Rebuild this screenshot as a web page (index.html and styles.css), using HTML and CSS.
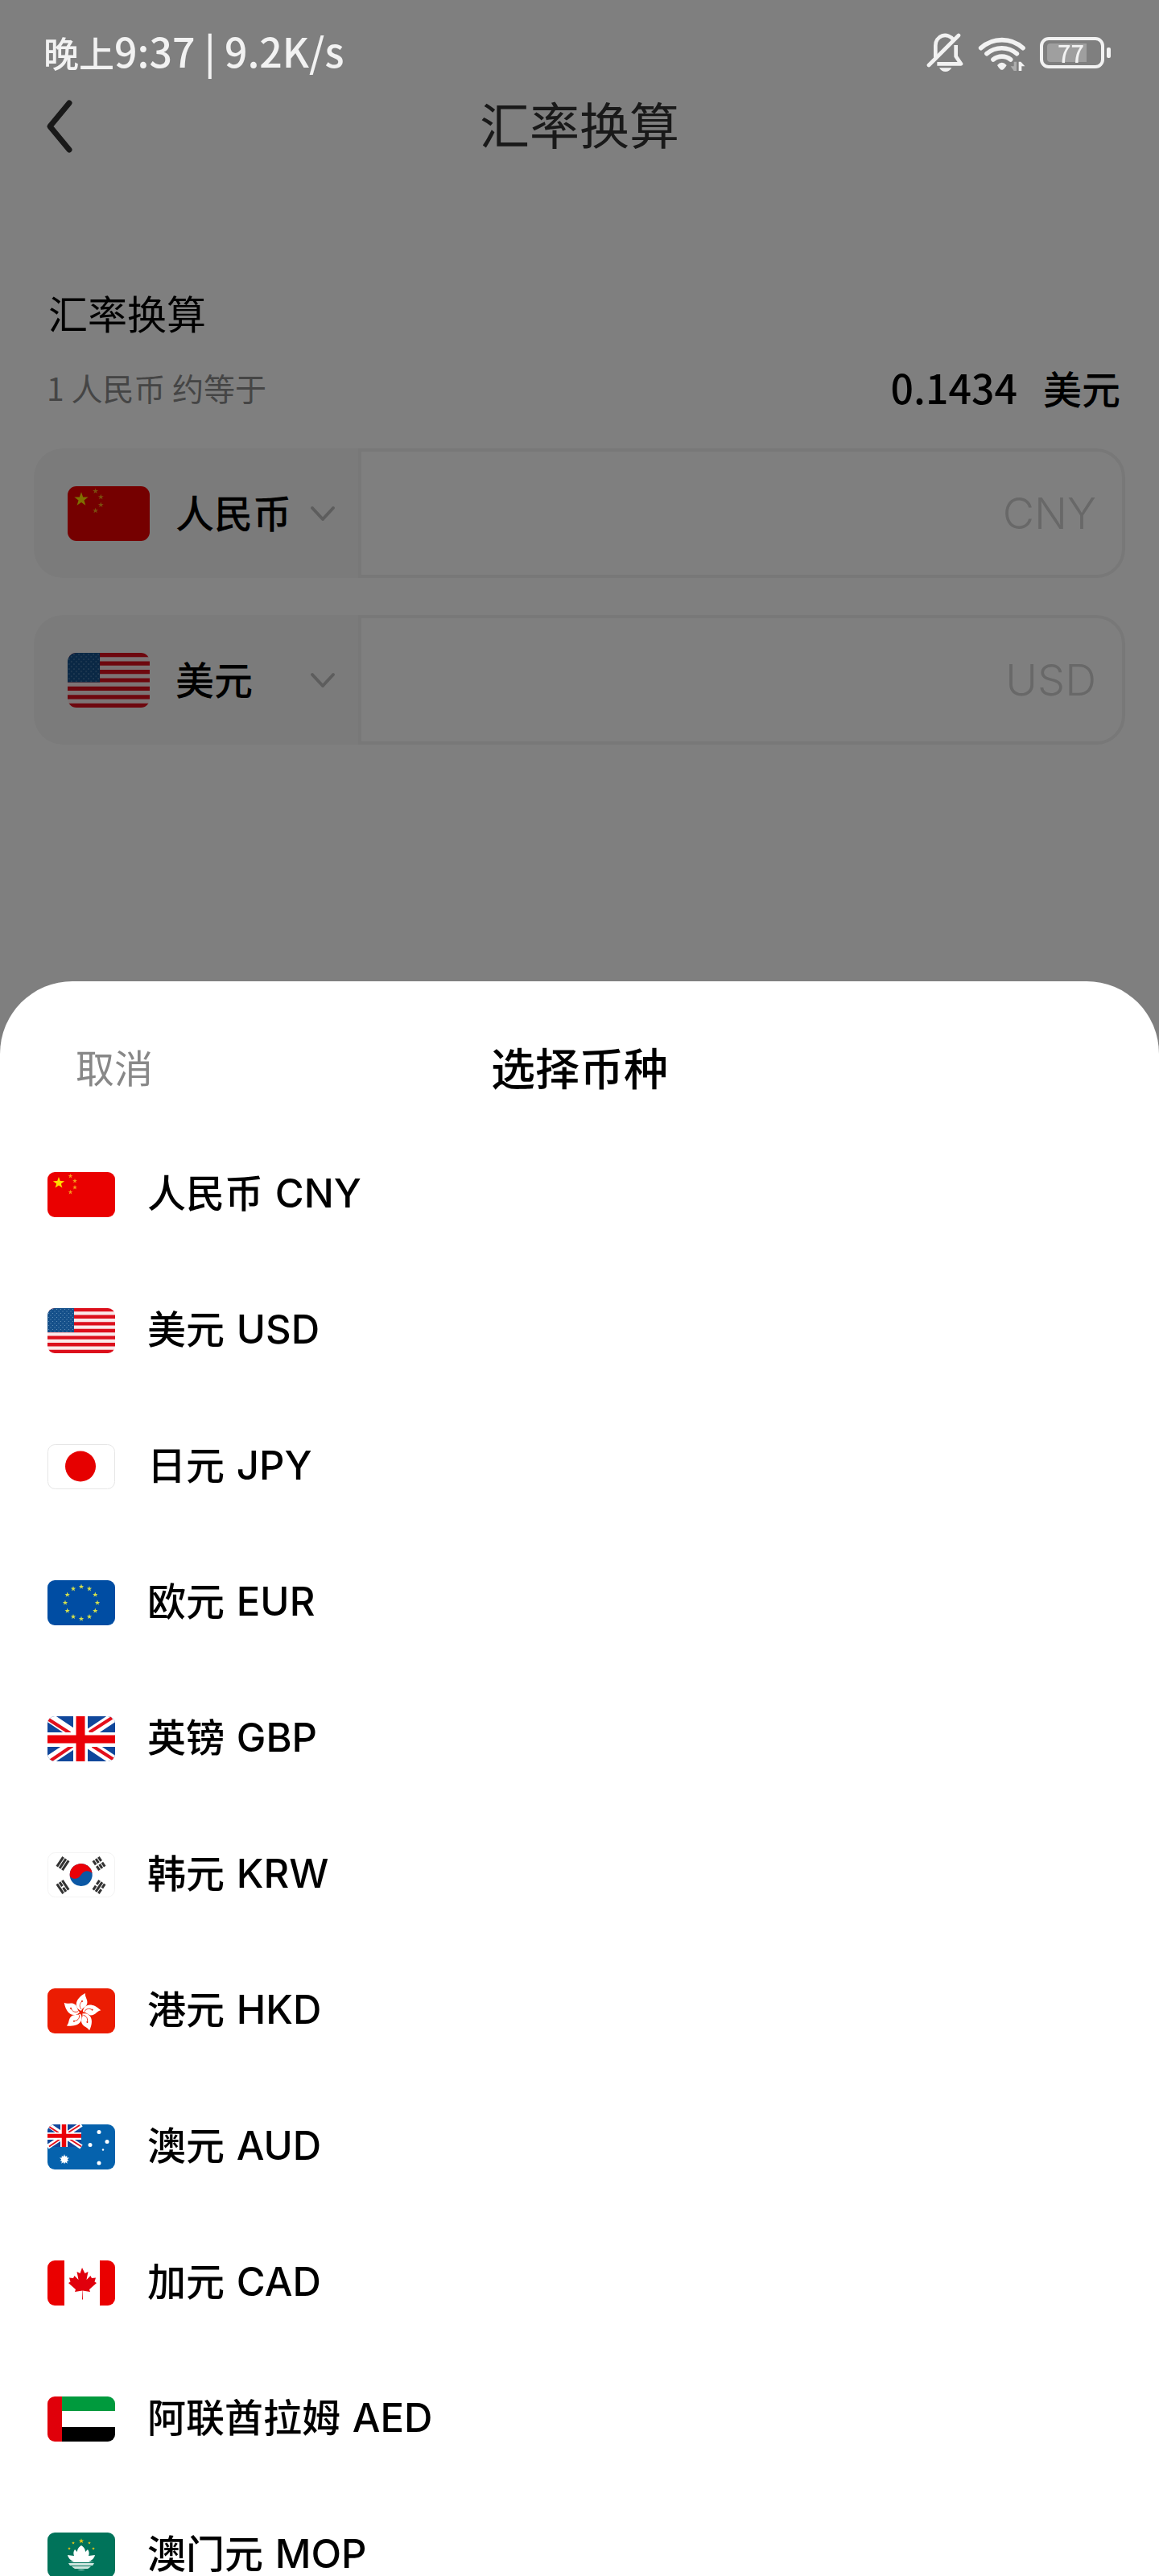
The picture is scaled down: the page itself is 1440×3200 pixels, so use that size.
FILE: index.html
```html
<!DOCTYPE html>
<html lang="zh-CN">
<head>
<meta charset="utf-8">
<meta name="viewport" content="width=device-width, initial-scale=1">
<title>汇率换算</title>
<link rel="stylesheet" href="styles.css">
</head>
<body>
<svg class="defs" aria-hidden="true">
  <defs>
    <clipPath id="round"><rect width="84" height="56" rx="9"/></clipPath>
    <path id="star" d="M0-10 2.4-3.2 9.5-3.1 3.8 1.2 5.9 8.1 0 4-5.9 8.1-3.8 1.2-9.5-3.1-2.4-3.2z"/>
    <pattern id="dots" width="5" height="5" patternUnits="userSpaceOnUse">
      <circle cx="1.5" cy="1.5" r=".6" fill="#6f9abf"/><circle cx="4" cy="4" r=".6" fill="#6f9abf"/>
    </pattern>
    <symbol id="cn" viewBox="0 0 84 56"><g clip-path="url(#round)">
      <path fill="#ea0000" d="M0 0h84v56H0z"/>
      <g fill="#ffde00"><use href="#star" transform="translate(14 13.5) scale(.75)"/></g>
      <g fill="#f59a1c"><use href="#star" transform="translate(28.500 5) scale(.3)"/><use href="#star" transform="translate(34 11) scale(.3)"/><use href="#star" transform="translate(34 19) scale(.3)"/><use href="#star" transform="translate(28.500 25) scale(.3)"/></g>
    </g></symbol>
    <symbol id="us" viewBox="0 0 84 56"><g clip-path="url(#round)">
      <path fill="#fbe9ea" d="M0 0h84v56H0z"/>
      <path stroke="#dc0f1c" stroke-width="4.300" d="M0 2.150h84M0 10.770h84M0 19.380h84M0 28h84M0 36.600h84M0 45.230h84M0 53.850h84"/>
      <path fill="#15508a" d="M0 0h33v30H0z"/><path fill="url(#dots)" d="M0 0h33v30H0z"/>
    </g></symbol>
    <symbol id="jp" viewBox="0 0 84 56">
      <rect x=".5" y=".5" width="83" height="55" rx="9" fill="#fff" stroke="#e6e6e6"/><circle cx="41" cy="27.500" r="19" fill="#e60000"/>
    </symbol>
    <symbol id="eu" viewBox="0 0 84 56"><g clip-path="url(#round)">
      <path fill="#004da3" d="M0 0h84v56H0z"/>
      <g fill="#d3e04c" transform="translate(42 28)">
        <use href="#star" transform="translate(0 -20) scale(.34)"/><use href="#star" transform="translate(10 -17.300) scale(.34)"/><use href="#star" transform="translate(17.300 -10) scale(.34)"/><use href="#star" transform="translate(20 0) scale(.34)"/><use href="#star" transform="translate(17.300 10) scale(.34)"/><use href="#star" transform="translate(10 17.300) scale(.34)"/><use href="#star" transform="translate(0 20) scale(.34)"/><use href="#star" transform="translate(-10 17.300) scale(.34)"/><use href="#star" transform="translate(-17.300 10) scale(.34)"/><use href="#star" transform="translate(-20 0) scale(.34)"/><use href="#star" transform="translate(-17.300 -10) scale(.34)"/><use href="#star" transform="translate(-10 -17.300) scale(.34)"/>
      </g>
    </g></symbol>
    <g id="union">
      <path fill="#10479b" d="M0 0h84v56H0z"/>
      <path stroke="#fff" stroke-width="12" d="M0 0 84 56M84 0 0 56"/>
      <path stroke="#e3101c" stroke-width="4" d="M0 3 28 21M52 20 80 2M4 55 32 36M56 37 84 55"/>
      <path fill="#fff" d="M32 0h18v56H32zM0 20h84v18H0z"/>
      <path fill="#ea0008" d="M35.500 0h11v56h-11zM0 23.500h84v10H0z"/>
    </g>
    <symbol id="gb" viewBox="0 0 84 56"><g clip-path="url(#round)"><use href="#union"/></g></symbol>
    <symbol id="kr" viewBox="0 0 84 56">
      <rect x=".5" y=".5" width="83" height="55" rx="9" fill="#fff" stroke="#f3f3f3"/>
      <g transform="rotate(-8 41.700 28)"><circle cx="41.700" cy="28" r="14" fill="#0b58a5"/><path fill="#ea0008" d="M27.700 28a14 14 0 0 1 28 0c-4-5-10-5-14 0s-10 5-14 0z"/></g>
      <g stroke="#333" stroke-width="3">
        <path transform="translate(19 14) rotate(-56)" d="M-7-4H7M-7 0H7M-7 4H7"/>
        <path transform="translate(64 14) rotate(56)" d="M-7-4h6M1-4h6M-7 0h6M1 0h6M-7 4h6M1 4h6"/>
        <path transform="translate(19 43) rotate(56)" d="M-7-4H7M-7 0h6M1 0h6M-7 4H7"/>
        <path transform="translate(64 43) rotate(-56)" d="M-7-4h6M1-4h6M-7 0H7M-7 4h6M1 4h6"/>
      </g>
    </symbol>
    <g id="petal"><path fill="#fff" d="M0-2C-8-5-10-16 5-24 4-19 9-16 7-10 5-6 1-6 0-2z"/><path fill="none" stroke="#eb1c02" stroke-width=".8" d="M0-4C-3-8-2-11 1-14"/><circle cx="1" cy="-14" r="1" fill="#eb1c02"/></g>
    <symbol id="hk" viewBox="0 0 84 56"><g clip-path="url(#round)">
      <path fill="#eb1c02" d="M0 0h84v56H0z"/>
      <g transform="translate(42 30)"><use href="#petal"/><use href="#petal" transform="rotate(72)"/><use href="#petal" transform="rotate(144)"/><use href="#petal" transform="rotate(216)"/><use href="#petal" transform="rotate(288)"/></g>
    </g></symbol>
    <symbol id="au" viewBox="0 0 84 56"><g clip-path="url(#round)">
      <path fill="#0562ad" d="M0 0h84v56H0z"/>
      <use href="#union" transform="scale(.5)"/>
      <g fill="#fff"><circle cx="21" cy="43.500" r="4"/><use href="#star" transform="translate(21 43.500) scale(.65)"/><use href="#star" transform="translate(21 43.500) rotate(180) scale(.6)"/><circle cx="64" cy="9.500" r="2.500"/><circle cx="74" cy="21.500" r="2.500"/><circle cx="53" cy="25.500" r="2.500"/><circle cx="69" cy="31.500" r="1.200"/><circle cx="64" cy="48" r="2.500"/></g>
    </g></symbol>
    <symbol id="ca" viewBox="0 0 84 56"><g clip-path="url(#round)">
      <path fill="#fff" d="M0 0h84v56H0z"/><path fill="#ea0000" d="M0 0h21v56H0zM65 0h19v56H65z"/>
      <path fill="#e0000c" d="M43 9l3.500 7 4-2-2 10 5-5 1.500 3 5-.5-1.500 5 2.500 1.500-9 8 1 3-9.300-1.500.3 11h-1l.3-11L34 39l1-3-9-8 2.500-1.500-1.500-5 5 .5 1.500-3 5 5-2-10 4 2z"/>
    </g></symbol>
    <symbol id="ae" viewBox="0 0 84 56"><g clip-path="url(#round)">
      <path fill="#fff" d="M0 0h84v56H0z"/><path fill="#009a3d" d="M17 0h67v18H17z"/><path d="M17 38h67v18H17z"/><path fill="#e0000a" d="M0 0h18v56H0z"/>
    </g></symbol>
    <symbol id="mo" viewBox="0 0 84 56"><g clip-path="url(#round)">
      <path fill="#00735a" d="M0 0h84v56H0z"/>
      <g fill="#e6c619"><use href="#star" transform="translate(42 10.500) scale(.33)"/><use href="#star" transform="translate(32 13) scale(.2)"/><use href="#star" transform="translate(52 13) scale(.2)"/><use href="#star" transform="translate(27 20) scale(.2)"/><use href="#star" transform="translate(57 20) scale(.2)"/></g>
      <path fill="#fff" d="M42 16c4 3 5 5 5 8l3-3c2 3 2 5 1 8l8-1c-1 4-4 7-8 8l7 1H26l7-1c-4-1-7-4-8-8l8 1c-1-3-1-5 1-8l3 3c0-3 1-5 5-8z"/>
      <path fill="#cfe6df" d="M26 38h32q-1 2-2 3H28q-1-1-2-3zM30 42h24q-2 2-4 3H34q-2-1-4-3zM37 46h10q-5 2-10 0z"/>
    </g></symbol>
    <symbol id="chevron" viewBox="0 0 32 20"><path d="M3 3l13 14L29 3" fill="none" stroke="currentColor" stroke-width="4" stroke-linecap="round" stroke-linejoin="round"/></symbol>
  </defs>
</svg>

<header class="status">
  <span class="status-text">晚上<span class="status-latin">9:37 | 9.2K/s</span></span>
  <div class="status-icons">
    <svg class="bell" viewBox="150 60 138 150" role="img" aria-label="静音">
      <g fill="none" stroke="currentColor" stroke-width="14">
        <path d="M184 155V110a36 36 0 0 1 66-22"/>
        <path d="M159 183 270 72" stroke-linecap="round"/>
        <path d="M260 108v42l19 28H190" stroke-linejoin="round"/>
      </g>
      <path fill="currentColor" d="M198 193h46q-8 14-23 14t-23-14z"/>
    </svg>
    <svg class="wifi" viewBox="339 63 177 141" role="img" aria-label="无线网络">
      <g fill="none" stroke="currentColor" stroke-width="17" stroke-linecap="round">
        <path d="M350 116a117 117 0 0 1 157 0"/><path d="M372 137a86 86 0 0 1 112 0"/><path d="M396 159a51 51 0 0 1 65 0"/>
      </g>
      <path fill="currentColor" d="M411 180q17-19 35 0-8 14-15 17-3 1-6 0-8-5-14-17z"/>
      <path fill="currentColor" opacity=".4" d="M473 167h10v34h-10l-12-17h12z"/>
      <path fill="currentColor" d="M491 201v-34h8l15 17h-12v17z"/>
    </svg>
    <div class="battery"><div class="battery-body"><span class="battery-level">77</span></div><span class="battery-tip"></span></div>
  </div>
</header>

<div class="page">
  <nav class="nav">
    <button class="back" type="button" aria-label="返回">
      <svg viewBox="0 0 40 68"><path d="M34 5 10 34l24 29" fill="none" stroke="currentColor" stroke-width="7" stroke-linecap="round" stroke-linejoin="round"/></svg>
    </button>
    <h1 class="nav-title">汇率换算</h1>
  </nav>
  <main class="main">
    <h2 class="heading">汇率换算</h2>
    <div class="rate">
      <span class="rate-from">1 人民币 约等于</span>
      <span class="rate-to"><span class="rate-value">0.1434</span><span>美元</span></span>
    </div>
    <div class="fields">
      <div class="field">
        <button class="picker" type="button"><svg class="flag-large"><use href="#cn"/></svg><span class="picker-name">人民币</span><svg class="chevron"><use href="#chevron"/></svg></button>
        <input class="amount" type="text" inputmode="decimal" placeholder="CNY" aria-label="人民币金额">
      </div>
      <div class="field">
        <button class="picker" type="button"><svg class="flag-large"><use href="#us"/></svg><span class="picker-name">美元</span><svg class="chevron"><use href="#chevron"/></svg></button>
        <input class="amount" type="text" inputmode="decimal" placeholder="USD" aria-label="美元金额">
      </div>
    </div>
  </main>
</div>

<div class="overlay">
  <section class="sheet" role="dialog" aria-labelledby="sheet-title">
    <div class="sheet-head">
      <button class="cancel" type="button">取消</button>
      <h2 class="sheet-title" id="sheet-title">选择币种</h2>
    </div>
    <ul class="list">
      <li><button class="row" type="button"><svg class="flag"><use href="#cn"/></svg><span class="row-name">人民币 <span class="code">CNY</span></span></button></li>
      <li><button class="row" type="button"><svg class="flag"><use href="#us"/></svg><span class="row-name">美元 <span class="code">USD</span></span></button></li>
      <li><button class="row" type="button"><svg class="flag"><use href="#jp"/></svg><span class="row-name">日元 <span class="code">JPY</span></span></button></li>
      <li><button class="row" type="button"><svg class="flag"><use href="#eu"/></svg><span class="row-name">欧元 <span class="code">EUR</span></span></button></li>
      <li><button class="row" type="button"><svg class="flag"><use href="#gb"/></svg><span class="row-name">英镑 <span class="code">GBP</span></span></button></li>
      <li><button class="row" type="button"><svg class="flag"><use href="#kr"/></svg><span class="row-name">韩元 <span class="code">KRW</span></span></button></li>
      <li><button class="row" type="button"><svg class="flag"><use href="#hk"/></svg><span class="row-name">港元 <span class="code">HKD</span></span></button></li>
      <li><button class="row" type="button"><svg class="flag"><use href="#au"/></svg><span class="row-name">澳元 <span class="code">AUD</span></span></button></li>
      <li><button class="row" type="button"><svg class="flag"><use href="#ca"/></svg><span class="row-name">加元 <span class="code">CAD</span></span></button></li>
      <li><button class="row" type="button"><svg class="flag"><use href="#ae"/></svg><span class="row-name">阿联酋拉姆 <span class="code">AED</span></span></button></li>
      <li><button class="row" type="button"><svg class="flag"><use href="#mo"/></svg><span class="row-name">澳门元 <span class="code">MOP</span></span></button></li>
    </ul>
  </section>
</div>
</body>
</html>
```
FILE: styles.css
```css
* {
  box-sizing: border-box;
}

body {
  margin: 0;
  min-height: 100vh;
  background: #fff;
  color: #000;
  font-family: "Noto Sans CJK SC", sans-serif;
  font-size: 48px;
  line-height: 64px;
}

h1,
h2 {
  margin: 0;
}

button {
  padding: 0;
  border: 0;
  background: none;
  color: inherit;
  font: inherit;
  text-align: left;
}

svg {
  display: block;
  flex: none;
}

.defs {
  position: absolute;
  width: 0;
  height: 0;
}

/* Status bar stays bright above the dimmed page */
.status {
  position: relative;
  z-index: 3;
  display: flex;
  align-items: center;
  justify-content: space-between;
  height: 108px;
  padding: 22px 60px 0 54px;
  color: #f2f2f2;
}

.status-text {
  padding-bottom: 4px;
  font-size: 44px;
  font-weight: 500;
  white-space: pre;
}

.status-latin {
  font-size: 50px;
}

.status-icons {
  display: flex;
  align-items: center;
  gap: 18px;
}

.bell {
  width: 46px;
  height: 50px;
}

.wifi {
  width: 59px;
  height: 47px;
}

.battery {
  display: flex;
  align-items: center;
  gap: 3px;
}

.battery-body {
  width: 80px;
  height: 39px;
  padding: 4px 5px;
  border: 4px solid currentColor;
  border-radius: 11px;
}

.battery-level {
  display: block;
  width: 49px;
  height: 23px;
  padding-left: 13px;
  border-radius: 4px 0 0 4px;
  background: rgba(255, 255, 255, 0.25);
  font-size: 29px;
  font-weight: 500;
  line-height: 22px;
}

.battery-tip {
  width: 5px;
  height: 13px;
  border-radius: 2px;
  background: currentColor;
}

/* Converter page */
.nav {
  display: grid;
  grid-template-columns: 1fr auto 1fr;
  align-items: center;
  height: 98px;
  padding: 0 52px;
  color: #333;
}

.back svg {
  width: 40px;
  height: 68px;
}

.nav-title {
  padding-bottom: 8px;
  font-size: 62px;
  font-weight: 400;
}

.main {
  padding: 150px 42px 0;
}

.heading {
  padding: 0 18px;
  font-size: 49px;
  font-weight: 400;
}

.rate {
  display: flex;
  align-items: center;
  justify-content: space-between;
  margin: 28px 0 44px;
  padding: 0 6px 0 16px;
}

.rate-from {
  color: #8a8a8a;
  font-size: 39px;
}

.rate-to {
  display: flex;
  align-items: baseline;
  gap: 32px;
  font-weight: 500;
}

.rate-value {
  font-size: 50px;
}

.fields {
  display: grid;
  gap: 46px;
}

.field {
  display: flex;
  height: 161px;
}

.picker {
  display: flex;
  align-items: center;
  flex: none;
  width: 403px;
  padding: 0 28px 0 42px;
  border-radius: 36px 0 0 36px;
  background: #f7f7f7;
  font-weight: 500;
}

.flag-large {
  width: 102px;
  height: 68px;
}

.picker-name {
  flex: 1;
  padding: 0 0 6px 32px;
}

.chevron {
  width: 32px;
  height: 20px;
  color: #bbb;
}

.amount {
  flex: 1;
  min-width: 0;
  padding: 0 32px;
  border: 4px solid #f0f0f0;
  border-radius: 0 36px 36px 0;
  background: #fff;
  color: #000;
  font-family: Inter, "Noto Sans CJK SC", sans-serif;
  font-size: 54px;
  font-weight: 300;
  text-align: right;
}

.amount::placeholder {
  color: #d0d0d0;
  opacity: 1;
}

/* Currency sheet */
.overlay {
  position: fixed;
  inset: 0;
  z-index: 2;
  display: flex;
  align-items: flex-end;
  background: rgba(0, 0, 0, 0.5);
}

.sheet {
  flex: 1;
  height: 61.9%;
  overflow: hidden;
  border-radius: 90px 90px 0 0;
  background: #fff;
}

.sheet-head {
  display: grid;
  grid-template-columns: 1fr auto 1fr;
  align-items: center;
  height: 180px;
  padding: 30px 94px 0;
}

.cancel {
  color: #888;
}

.sheet-title {
  font-size: 55px;
  font-weight: 500;
}

.list {
  margin: 0;
  padding: 0;
  list-style: none;
}

.row {
  display: flex;
  align-items: center;
  gap: 40px;
  width: 100%;
  height: 169px;
  padding: 0 59px;
  font-weight: 500;
}

.row-name {
  padding-bottom: 6px;
}

.code {
  padding-left: 4px;
  font-family: Inter, "Noto Sans CJK SC", sans-serif;
  font-size: 49px;
}

.flag {
  width: 84px;
  height: 56px;
}
```
